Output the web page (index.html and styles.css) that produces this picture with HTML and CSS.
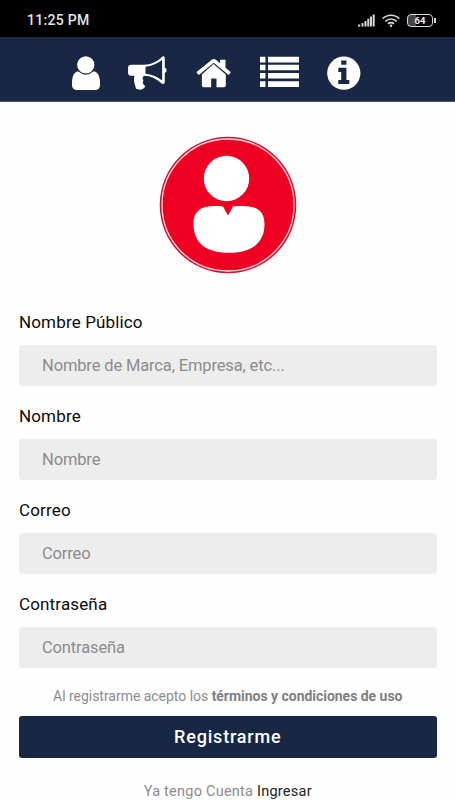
FILE: index.html
```html
<!DOCTYPE html>
<html lang="es">
<head>
<meta charset="utf-8">
<meta name="viewport" content="width=device-width, initial-scale=1">
<title>Registro</title>
<link rel="stylesheet" href="styles.css">
</head>
<body>
<div class="status">
  <span class="time">11:25 PM</span>
  <div class="indicators">
    <svg width="17" height="13" viewBox="0 0 17 13" fill="#d8d8d8"><path d="M0 10.5h2.2V12.500H0zM3.500 9h2v3.500h-2zM6.500 7h2v5.500h-2zM9.300 4.800h2v7.700h-2zM12 2.600h2v9.900h-2zM14.700 0.500h2v12h-2z"/></svg>
    <svg width="18" height="13" viewBox="0 0 18 13" fill="none" stroke="#d8d8d8" stroke-width="1.700"><path d="M0.700 4.600C5.300 0.100 12.700 0.100 17.300 4.600M3.300 7.300C6.600 4.200 11.400 4.200 14.700 7.300M6 9.900C7.700 8.300 10.300 8.300 12 9.900"/><circle cx="9" cy="11.700" r="1.200" fill="#d8d8d8" stroke="none"/></svg>
    <div class="battery"><span>64</span></div>
  </div>
</div>
<nav class="nav">
  <svg width="28" height="34" viewBox="0 0 28 34" fill="#fff"><path d="M5 15.500C1.500 17 0 21.500 0 26.500V29C0 32 2 34 5 34H23C26 34 28 32 28 29V26.500C28 21.500 26.500 17 23 15.500Z"/><circle cx="13.800" cy="8.900" r="9.200" stroke="#182743" stroke-width="1.200"/></svg>
  <svg width="40" height="34" viewBox="0 0 40 34"><path fill="#fff" fill-rule="evenodd" d="M3 8.700H16C23 8.500 29 5.500 33.800 0.900C35 -0.200 36.800 0.300 36.800 2V11.700C39.200 12.300 39.200 16.200 36.800 16.800V26C36.800 27.800 35 28.500 33.800 27.400C28 22.500 22.500 20 16.500 19.800C14.300 20.600 14 22.800 15.500 24.300C14.200 26.200 14.800 28 17.300 30.200C15.800 34 10 34.600 8 32.500C7 28.500 5 24.500 6.500 19.700H3C1.300 19.700 0 18.400 0 16.700V11.700C0 10 1.300 8.700 3 8.700ZM17.500 10.800V17.700C23.500 18.200 28.700 20.500 34.100 24.500V4.100C29 8 23.500 10.200 17.500 10.800Z"/></svg>
  <svg width="36" height="34" viewBox="0 0 36 34"><path fill="#fff" d="M17.500 8L29.800 18.500V29.500C29.800 30.500 29 31.200 28 31.200H20.500V22.500H15.200V31.200H7.700C6.700 31.200 5.900 30.500 5.900 29.500V18.500Z"/><path fill="#fff" d="M0.600 16L15.800 3.700C17 2.800 18.700 2.800 19.900 3.700L24 7.200V3.800H29.500V11.700L34.700 16C34.400 17.600 33.500 18.500 32.200 18.700L17.800 6.700L3.200 18.700C1.900 18.500 0.900 17.500 0.600 16Z"/></svg>
  <svg width="39" height="34" viewBox="0 0 39 34" fill="#fff"><path d="M0 0.800h5.500v5.700H0zM8 0.800h31v5.700H8zM0 8.700h5.500v5.500H0zM8 8.700h31v5.500H8zM0 17h5.500v5.500H0zM8 17h31v5.500H8zM0 25.200h5.500V31H0zM8 25.200h31V31H8z"/></svg>
  <svg width="34" height="34" viewBox="0 0 34 34"><circle cx="16.800" cy="17.200" r="16.600" fill="#fff"/><path fill="#182743" d="M14.200 4.500h5.200v4.300h-5.200zM11.300 11.800h8.100v12.100h2.900v4H11.300v-4h2.900v-8h-2.900z"/></svg>
</nav>
<main class="content">
  <svg class="avatar" width="138" height="138" viewBox="0 0 138 138"><circle cx="69" cy="69" r="68.300" fill="#d5112b"/><circle cx="69" cy="69" r="66" fill="#ef0022" stroke="#ffd5dc" stroke-width="1.300"/><circle cx="67.500" cy="42.500" r="22.700" fill="#fff"/><path fill="#fff" d="M64 70.500L69 79.500L74 70.500C80 69.800 88 70 93 71C101.500 73 105.500 79 105.500 88C105.500 106 94 116.800 70 116.800S34.500 106 34.500 88C34.500 79 38 73 46.500 71C52 70 58 69.800 64 70.500Z"/></svg>
  <form class="form">
    <label class="field"><span>Nombre Público</span><input type="text" placeholder="Nombre de Marca, Empresa, etc..."></label>
    <label class="field"><span>Nombre</span><input type="text" placeholder="Nombre"></label>
    <label class="field"><span>Correo</span><input type="email" placeholder="Correo"></label>
    <label class="field"><span>Contraseña</span><input type="password" placeholder="Contraseña"></label>
    <p class="terms">Al registrarme acepto los <b>términos y condiciones de uso</b></p>
    <button class="submit" type="button">Registrarme</button>
    <p class="login">Ya tengo Cuenta <a>Ingresar</a></p>
  </form>
</main>
</body>
</html>
```

FILE: styles.css
```css
* { box-sizing: border-box; }
body {
  margin: 0;
  height: 800px;
  overflow: hidden;
  background: #fefefe;
  font-family: Roboto, "Liberation Sans", sans-serif;
}
.status {
  height: 37px;
  padding: 3px 20px 0 27px;
  background: #000;
  display: flex;
  align-items: center;
  justify-content: space-between;
}
.time {
  color: #e4e4e4;
  font-size: 14px;
  font-weight: 500;
  letter-spacing: 0.3px;
}
.indicators { display: flex; align-items: center; gap: 7px; }
.battery {
  position: relative;
  width: 26px;
  height: 13px;
  margin-right: 2px;
  border: 1.5px solid #d8d8d8;
  border-radius: 4px;
  background: linear-gradient(90deg, #444 35%, #000 35%);
  color: #eee;
  font-size: 9.5px;
  font-weight: 700;
  line-height: 11px;
  text-align: center;
}
.battery::after {
  content: "";
  position: absolute;
  right: -4px;
  top: 3px;
  width: 2px;
  height: 5px;
  background: #d8d8d8;
}
.nav {
  height: 65px;
  padding: 19px 0 0 72px;
  background: #182743;
  border-bottom: 1px solid #4a556b;
  display: flex;
  gap: 28px;
}
.nav svg { flex: none; }
.content { padding: 34px 18.5px 0 19px; }
.avatar { display: block; margin: 0 auto; }
.form { padding-top: 38px; }
.field { display: block; height: 94px; }
.field span {
  display: block;
  height: 33.4px;
  line-height: 20px;
  font-size: 17px;
  letter-spacing: 0.15px;
  color: #0a0a0a;
}
.field input {
  display: block;
  width: 100%;
  height: 41px;
  padding: 0 23px 1px;
  border: 0;
  border-radius: 3px;
  background: #ededed;
  font: 16.5px Roboto, "Liberation Sans", sans-serif;
  letter-spacing: -0.14px;
}
.field input::placeholder { color: #8c8c8c; opacity: 1; }
.terms {
  margin: -2px 0 0;
  height: 30px;
  line-height: 20px;
  text-align: center;
  color: #8c8c8c;
  font-size: 14px;
  letter-spacing: -0.03px;
}
.terms b { font-weight: 700; color: #808080; }
.submit {
  display: block;
  width: 100%;
  height: 42px;
  padding: 0 0 2px;
  border: 0;
  border-radius: 3px;
  background: #182743;
  color: #fff;
  font: 500 18px Roboto, "Liberation Sans", sans-serif;
  letter-spacing: 0.8px;
}
.login {
  margin: 24px 0 0;
  line-height: 20px;
  text-align: center;
  color: #8c8c8c;
  font-size: 14.5px;
  letter-spacing: 0.24px;
}
.login a { color: #222; }
```
